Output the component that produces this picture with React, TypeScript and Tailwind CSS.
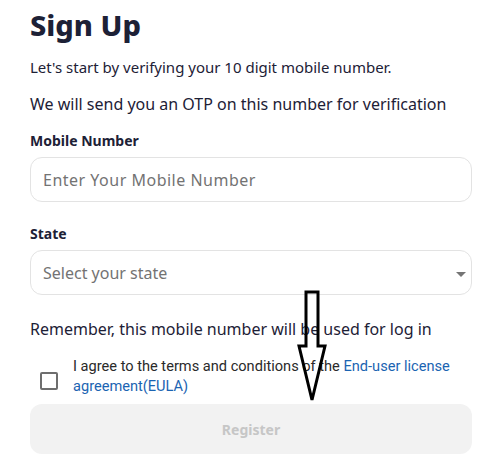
import React from "react";

export default function App() {
  return (
    <div className="relative min-h-[464px] bg-white" style={{ fontFamily: '"Noto Sans", "Open Sans", sans-serif' }}>
      <div className="w-[442px] ml-[30px] pt-[5px] text-[#1d2136]">
        <h1 className="text-[29px] leading-[40px] font-extrabold">Sign Up</h1>
        <p className="mt-[12px] text-[15px] leading-[20px]">Let's start by verifying your 10 digit mobile number.</p>
        <p className="mt-[16px] text-[16px] leading-[22px]">We will send you an OTP on this number for verification</p>

        <label className="block mt-[16px] text-[14px] leading-[20px] font-bold">Mobile Number</label>
        <input
          type="text"
          placeholder="Enter Your Mobile Number"
          className="mt-[6px] w-full h-[45px] px-[12px] rounded-[12px] border border-[#e3e3e3] text-[16px] placeholder:text-[#737373] placeholder:tracking-[0.5px] outline-none"
        />

        <label className="block mt-[22px] text-[14px] leading-[20px] font-bold">State</label>
        <div className="relative mt-[6px]">
          <select className="appearance-none w-full h-[45px] px-[12px] rounded-[12px] border border-[#e3e3e3] text-[16px] text-[#737373] bg-white outline-none">
            <option>Select your state</option>
          </select>
          <svg className="absolute right-[6px] top-[22px]" width="10" height="6" viewBox="0 0 10 6">
            <path d="M0 0 L10 0 L5 5 Z" fill="#757575" />
          </svg>
        </div>

        <p className="mt-[23px] text-[16px] leading-[22px]">Remember, this mobile number will be used for log in</p>

        <div className="flex items-start mt-[16px]" style={{ fontFamily: "Roboto, sans-serif" }}>
          <div className="w-[38px] shrink-0 pl-[10px] pt-[16px]">
            <span className="block w-[18px] h-[18px] border-2 border-[#6e6e6e] rounded-[2px]"></span>
          </div>
          <p className="pl-[5px] text-[14.6px] leading-[20px] text-[#2a2a2a]">
            I agree to the terms and conditions of the <a className="text-[#1b64b2]">End-user license agreement(EULA)</a>
          </p>
        </div>

        <button disabled className="mt-[8px] w-full h-[50px] rounded-[12px] bg-[#f2f2f2] text-[#c6c6c6] text-[14px] font-bold">
          Register
        </button>
      </div>

      <svg className="absolute left-0 top-0 pointer-events-none" width="500" height="464">
        <polygon points="306,292 318,292 318,346 325,346 312,400 299,346 306,346" fill="none" stroke="#000" strokeWidth="3" />
      </svg>
    </div>
  );
}
